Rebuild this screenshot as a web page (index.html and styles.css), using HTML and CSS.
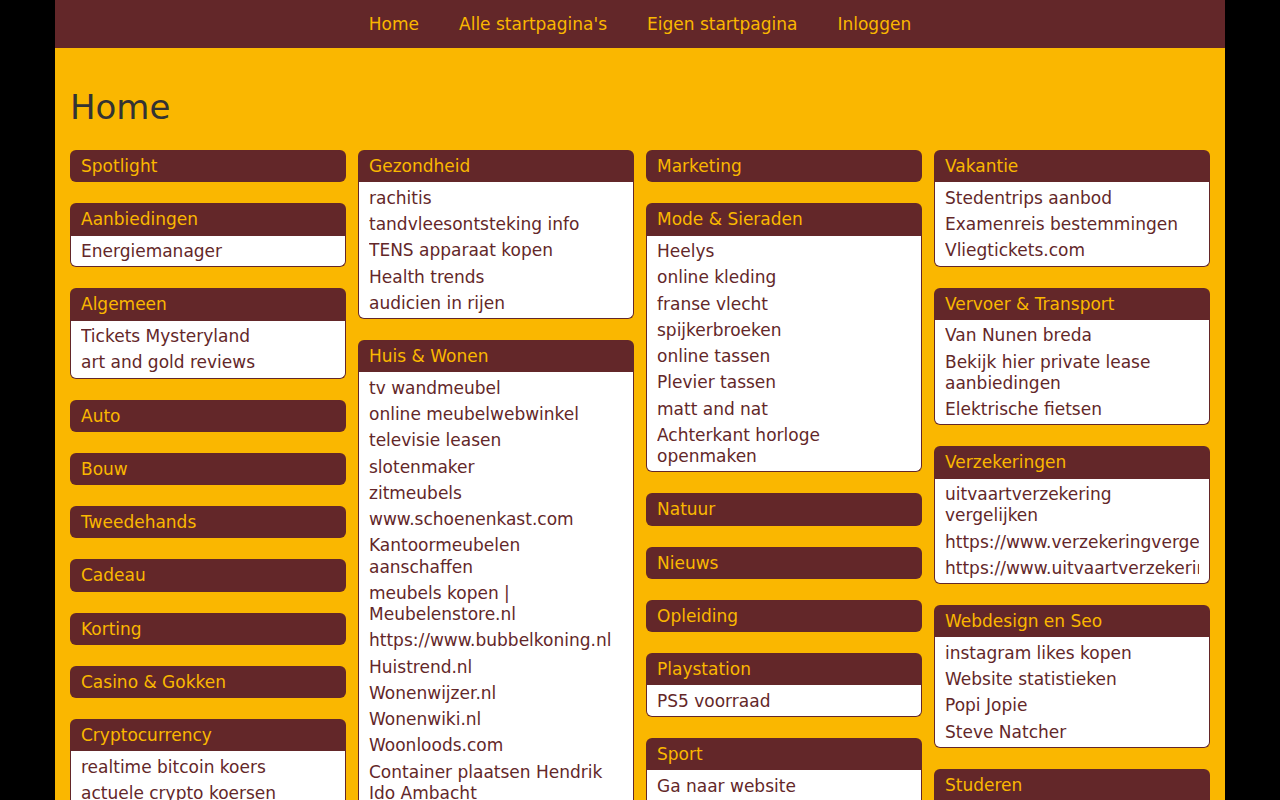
FILE: index.html
```html
<html>
    <head>
        <title>Home</title>
        <link rel="stylesheet" href="styles.css">
    </head>
    <body>
        <div class="page">
            <nav class="topnav">
                <a href="#">Home</a>
                <a href="#">Alle startpagina's</a>
                <a href="#">Eigen startpagina</a>
                <a href="#">Inloggen</a>
            </nav>
            <main class="content">
                <h1>Home</h1>
                <div class="columns">
                    <div class="column">
                        <div class="block empty"><div class="block-title">Spotlight</div></div>
                        <div class="block">
                            <div class="block-title">Aanbiedingen</div>
                            <ul class="links">
                                <li><a href="#">Energiemanager</a></li>
                            </ul>
                        </div>
                        <div class="block">
                            <div class="block-title">Algemeen</div>
                            <ul class="links">
                                <li><a href="#">Tickets Mysteryland</a></li>
                                <li><a href="#">art and gold reviews</a></li>
                            </ul>
                        </div>
                        <div class="block empty"><div class="block-title">Auto</div></div>
                        <div class="block empty"><div class="block-title">Bouw</div></div>
                        <div class="block empty"><div class="block-title">Tweedehands</div></div>
                        <div class="block empty"><div class="block-title">Cadeau</div></div>
                        <div class="block empty"><div class="block-title">Korting</div></div>
                        <div class="block empty"><div class="block-title">Casino &amp; Gokken</div></div>
                        <div class="block">
                            <div class="block-title">Cryptocurrency</div>
                            <ul class="links">
                                <li><a href="#">realtime bitcoin koers</a></li>
                                <li><a href="#">actuele crypto koersen</a></li>
                                <li><a href="#">bitcoin kopen</a></li>
                            </ul>
                        </div>
                    </div>
                    <div class="column">
                        <div class="block">
                            <div class="block-title">Gezondheid</div>
                            <ul class="links">
                                <li><a href="#">rachitis</a></li>
                                <li><a href="#">tandvleesontsteking info</a></li>
                                <li><a href="#">TENS apparaat kopen</a></li>
                                <li><a href="#">Health trends</a></li>
                                <li><a href="#">audicien in rijen</a></li>
                            </ul>
                        </div>
                        <div class="block">
                            <div class="block-title">Huis &amp; Wonen</div>
                            <ul class="links">
                                <li><a href="#">tv wandmeubel</a></li>
                                <li><a href="#">online meubelwebwinkel</a></li>
                                <li><a href="#">televisie leasen</a></li>
                                <li><a href="#">slotenmaker</a></li>
                                <li><a href="#">zitmeubels</a></li>
                                <li><a href="#">www.schoenenkast.com</a></li>
                                <li><a href="#">Kantoormeubelen aanschaffen</a></li>
                                <li><a href="#">meubels kopen | Meubelenstore.nl</a></li>
                                <li><a href="#">https://www.bubbelkoning.nl</a></li>
                                <li><a href="#">Huistrend.nl</a></li>
                                <li><a href="#">Wonenwijzer.nl</a></li>
                                <li><a href="#">Wonenwiki.nl</a></li>
                                <li><a href="#">Woonloods.com</a></li>
                                <li><a href="#">Container plaatsen Hendrik Ido Ambacht</a></li>
                                <li><a href="#">Tuinmeubelen</a></li>
                            </ul>
                        </div>
                    </div>
                    <div class="column">
                        <div class="block empty"><div class="block-title">Marketing</div></div>
                        <div class="block">
                            <div class="block-title">Mode &amp; Sieraden</div>
                            <ul class="links">
                                <li><a href="#">Heelys</a></li>
                                <li><a href="#">online kleding</a></li>
                                <li><a href="#">franse vlecht</a></li>
                                <li><a href="#">spijkerbroeken</a></li>
                                <li><a href="#">online tassen</a></li>
                                <li><a href="#">Plevier tassen</a></li>
                                <li><a href="#">matt and nat</a></li>
                                <li><a href="#">Achterkant horloge openmaken</a></li>
                            </ul>
                        </div>
                        <div class="block empty"><div class="block-title">Natuur</div></div>
                        <div class="block empty"><div class="block-title">Nieuws</div></div>
                        <div class="block empty"><div class="block-title">Opleiding</div></div>
                        <div class="block">
                            <div class="block-title">Playstation</div>
                            <ul class="links">
                                <li><a href="#">PS5 voorraad</a></li>
                            </ul>
                        </div>
                        <div class="block">
                            <div class="block-title">Sport</div>
                            <ul class="links">
                                <li><a href="#">Ga naar website</a></li>
                                <li><a href="#">Sportartikelen</a></li>
                            </ul>
                        </div>
                    </div>
                    <div class="column">
                        <div class="block">
                            <div class="block-title">Vakantie</div>
                            <ul class="links">
                                <li><a href="#">Stedentrips aanbod</a></li>
                                <li><a href="#">Examenreis bestemmingen</a></li>
                                <li><a href="#">Vliegtickets.com</a></li>
                            </ul>
                        </div>
                        <div class="block">
                            <div class="block-title">Vervoer &amp; Transport</div>
                            <ul class="links">
                                <li><a href="#">Van Nunen breda</a></li>
                                <li><a href="#">Bekijk hier private lease aanbiedingen</a></li>
                                <li><a href="#">Elektrische fietsen</a></li>
                            </ul>
                        </div>
                        <div class="block">
                            <div class="block-title">Verzekeringen</div>
                            <ul class="links">
                                <li><a href="#">uitvaartverzekering vergelijken</a></li>
                                <li><a href="#">https://www.verzekeringvergelijken.nl</a></li>
                                <li><a href="#">https://www.uitvaartverzekeringen.nl</a></li>
                            </ul>
                        </div>
                        <div class="block">
                            <div class="block-title">Webdesign en Seo</div>
                            <ul class="links">
                                <li><a href="#">instagram likes kopen</a></li>
                                <li><a href="#">Website statistieken</a></li>
                                <li><a href="#">Popi Jopie</a></li>
                                <li><a href="#">Steve Natcher</a></li>
                            </ul>
                        </div>
                        <div class="block">
                            <div class="block-title">Studeren</div>
                            <ul class="links">
                                <li><a href="#">Studiekeuze</a></li>
                            </ul>
                        </div>
                    </div>
                </div>
            </main>
        </div>
    </body>
</html>
```

FILE: styles.css
```css
html{
    background: #000;
}
body{
    margin: 0;
    font-family: "DejaVu Sans", Verdana, sans-serif;
    font-size: 17px;
    color: #333;
}
.page{
    width: 1170px;
    margin: 0 auto;
    background: #fab700;
    min-height: 100vh;
}
.topnav{
    background: #632729;
    height: 48px;
    display: flex;
    justify-content: center;
    align-items: center;
    gap: 40px;
}
.topnav a{
    color: #fab700;
    text-decoration: none;
    line-height: 21px;
}
.content{
    padding: 0 15px 20px;
}
h1{
    margin: 0;
    padding: 40px 0 24px;
    font-size: 34px;
    font-weight: normal;
    line-height: 38px;
    color: #333;
}
.columns{
    display: grid;
    grid-template-columns: repeat(4, minmax(0, 1fr));
    gap: 12px;
    align-items: start;
}
.column{
    display: flex;
    flex-direction: column;
    gap: 21px;
}
.block-title{
    background: #632729;
    color: #fab700;
    border-radius: 6px 6px 0 0;
    padding: 6px 11px 5px;
    line-height: 1.25;
}
.block.empty .block-title{
    border-radius: 6px;
}
.links{
    list-style: none;
    margin: 0;
    padding: 3px 10px 1.5px;
    background: #fff;
    border: 1px solid #632729;
    border-top: none;
    border-radius: 0 0 6px 6px;
}
.links li{
    padding: 2.5px 0;
    line-height: 1.25;
    overflow: hidden;
}
.links a{
    color: #632729;
    text-decoration: none;
}
```
